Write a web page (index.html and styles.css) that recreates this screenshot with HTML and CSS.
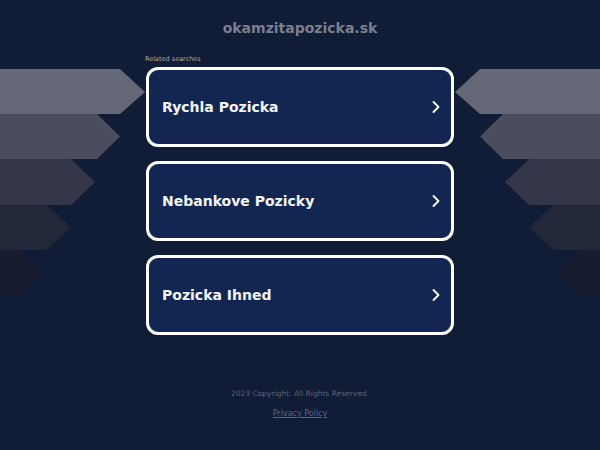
FILE: index.html
```html
<!DOCTYPE html>
<html>
<head>
<meta charset="utf-8">
<link rel="stylesheet" href="styles.css">
</head>
<body>
<header class="top">
  <h1 class="domain">okamzitapozicka.sk</h1>
</header>
<main class="stage">
  <aside class="deco">
    <svg class="deco-svg" width="146" height="250" viewBox="0 0 146 250">
      <polygon points="0,14 120,14 145,37 120,59 0,59" fill="#646775"/>
      <polygon points="0,59 97,59 120,81.5 97,104 0,104" fill="#4a4d5d"/>
      <polygon points="0,104 71,104 95,127 71,150 0,150" fill="#333648"/>
      <polygon points="0,150 47,150 71,172.5 47,195 0,195" fill="#23273a"/>
      <polygon points="0,195 20,195 43,217.5 20,240 0,240" fill="#181c31"/>
    </svg>
  </aside>
  <section class="center">
    <p class="label">Related searches</p>
    <div class="cards">
      <a class="card" href="#"><span class="card-text">Rychla Pozicka</span><svg class="chev" width="10" height="14" viewBox="0 0 10 14"><path d="M2.5 2 L7.5 7 L2.5 12" fill="none" stroke="#fff" stroke-width="1.8" stroke-linecap="round" stroke-linejoin="round"/></svg></a>
      <a class="card" href="#"><span class="card-text">Nebankove Pozicky</span><svg class="chev" width="10" height="14" viewBox="0 0 10 14"><path d="M2.5 2 L7.5 7 L2.5 12" fill="none" stroke="#fff" stroke-width="1.8" stroke-linecap="round" stroke-linejoin="round"/></svg></a>
      <a class="card" href="#"><span class="card-text">Pozicka Ihned</span><svg class="chev" width="10" height="14" viewBox="0 0 10 14"><path d="M2.5 2 L7.5 7 L2.5 12" fill="none" stroke="#fff" stroke-width="1.8" stroke-linecap="round" stroke-linejoin="round"/></svg></a>
    </div>
  </section>
  <aside class="deco">
    <svg class="deco-svg" width="146" height="250" viewBox="0 0 146 250">
      <polygon points="146,14 26,14 1,37 26,59 146,59" fill="#646775"/>
      <polygon points="146,59 49,59 26,81.5 49,104 146,104" fill="#4a4d5d"/>
      <polygon points="146,104 75,104 51,127 75,150 146,150" fill="#333648"/>
      <polygon points="146,150 99,150 75,172.5 99,195 146,195" fill="#23273a"/>
      <polygon points="146,195 126,195 103,217.5 126,240 146,240" fill="#181c31"/>
    </svg>
  </aside>
</main>
<footer class="foot">
  <p class="copy">2023 Copyright. All Rights Reserved.</p>
  <a class="privacy" href="#">Privacy Policy</a>
</footer>
</body>
</html>
```

FILE: styles.css
```css
html, body {
  margin: 0;
  padding: 0;
}
body {
  width: 600px;
  height: 450px;
  background: #111c37;
  font-family: "DejaVu Sans", "Liberation Sans", sans-serif;
  overflow: hidden;
}
.top {
  height: 55px;
  display: flex;
  justify-content: center;
}
.domain {
  margin: 18px 0 0;
  font-size: 14px;
  font-weight: bold;
  line-height: 20px;
  color: #7b7f8c;
}
.stage {
  display: flex;
  height: 300px;
}
.deco {
  width: 146px;
  flex: none;
}
.deco-svg {
  display: block;
}
.center {
  width: 308px;
  flex: none;
}
.label {
  margin: 0 0 0 -1px;
  height: 12px;
  font-size: 6.5px;
  line-height: 9px;
  color: #a7abb7;
}
.cards {
  display: flex;
  flex-direction: column;
  gap: 14px;
}
.card {
  box-sizing: border-box;
  height: 80px;
  border: 3px solid #ffffff;
  border-radius: 12px;
  background: #132652;
  display: flex;
  align-items: center;
  justify-content: space-between;
  padding: 0 10px 0 13px;
  text-decoration: none;
}
.card-text {
  color: #f4f5f8;
  font-size: 14px;
  font-weight: bold;
}
.chev {
  display: block;
}
.foot {
  display: flex;
  flex-direction: column;
  align-items: center;
  padding-top: 33px;
}
.copy {
  margin: 0;
  font-size: 7.5px;
  line-height: 12px;
  color: #5d6479;
}
.privacy {
  margin-top: 8px;
  font-size: 8px;
  line-height: 12px;
  color: #5d6479;
  text-decoration: underline;
}
```
